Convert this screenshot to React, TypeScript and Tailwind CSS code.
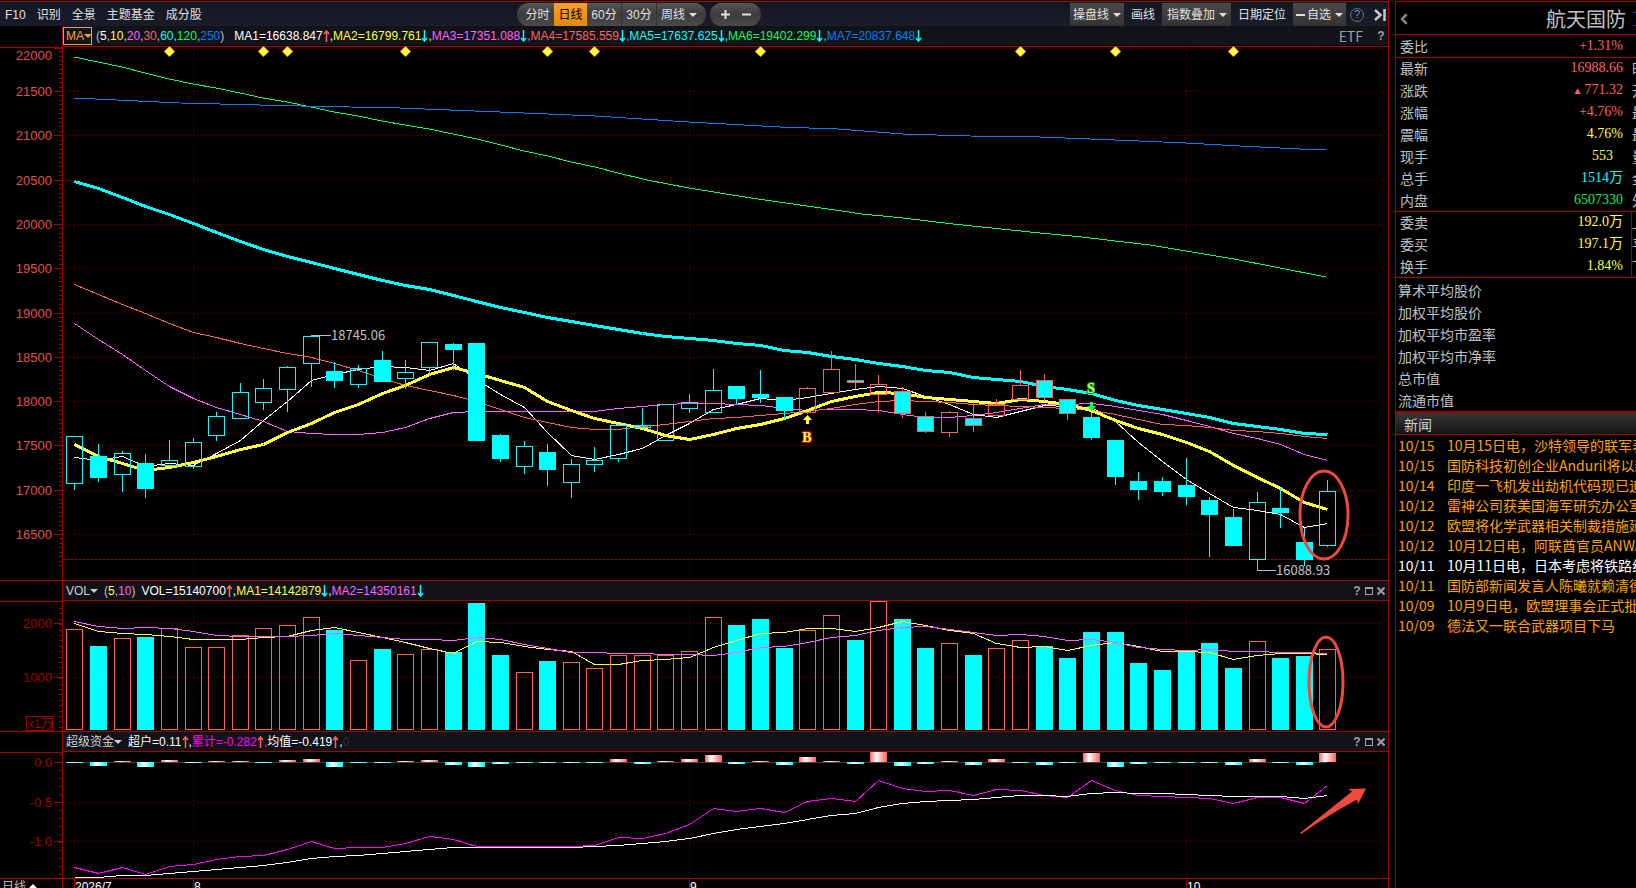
import { Fragment, type ReactNode } from "react";
import { ChevronLeft } from "lucide-react";

const RED = "#a00000";
const GRID = "#6a0000";
const UP = "#ff6060";
const CYAN = "#00ffff";

// every panel shares the same x positions, one per trading day
const cx = (i: number) => Math.floor(74.85 + 23.643 * i);

const months = [
  { index: 0, label: "2026/7" },
  { index: 5, label: "8" },
  { index: 26, label: "9" },
  { index: 47, label: "10" },
];

// h = hollow, f = filled, rh = red hollow, rf = red outline with fill
type Candle = [kind: "h" | "f" | "rh" | "rf", high: number, top: number, bottom: number, low: number];

const candles: Candle[] = [
  ["h", 436, 436, 484, 490],
  ["f", 444, 456, 478, 482],
  ["h", 451, 453, 475, 492],
  ["f", 454, 463, 489, 498],
  ["h", 440, 460, 466, 466],
  ["h", 438, 442, 467, 469],
  ["h", 412, 416, 436, 441],
  ["h", 383, 392, 419, 419],
  ["h", 379, 388, 403, 410],
  ["h", 366, 367, 390, 412],
  ["h", 336, 336, 364, 387],
  ["f", 362, 371, 381, 388],
  ["h", 365, 368, 385, 388],
  ["f", 351, 360, 382, 382],
  ["h", 360, 372, 379, 389],
  ["h", 342, 342, 368, 376],
  ["f", 343, 344, 350, 370],
  ["f", 343, 343, 441, 441],
  ["f", 434, 435, 459, 462],
  ["h", 441, 446, 467, 474],
  ["f", 444, 452, 470, 486],
  ["h", 459, 464, 483, 498],
  ["h", 447, 460, 465, 472],
  ["h", 424, 425, 459, 462],
  ["h", 408, 425, 428, 428],
  ["h", 404, 404, 441, 441],
  ["h", 394, 402, 409, 413],
  ["h", 369, 390, 413, 413],
  ["f", 386, 386, 399, 404],
  ["f", 370, 394, 398, 403],
  ["f", 397, 397, 411, 419],
  ["rh", 387, 388, 413, 414],
  ["rh", 351, 369, 393, 393],
  ["rf", 364, 380, 383, 389],
  ["rh", 375, 384, 395, 413],
  ["rf", 387, 391, 414, 418],
  ["rf", 412, 416, 432, 433],
  ["rh", 411, 412, 433, 437],
  ["rf", 402, 418, 426, 432],
  ["rh", 399, 404, 416, 416],
  ["rh", 370, 385, 400, 400],
  ["rf", 374, 380, 398, 401],
  ["rf", 399, 399, 414, 420],
  ["f", 412, 417, 438, 440],
  ["f", 440, 440, 477, 485],
  ["f", 472, 481, 490, 500],
  ["f", 477, 481, 492, 496],
  ["f", 458, 485, 497, 505],
  ["f", 497, 500, 515, 557],
  ["f", 509, 517, 546, 546],
  ["h", 492, 502, 560, 570],
  ["f", 488, 508, 513, 528],
  ["f", 528, 542, 560, 566],
  ["h", 480, 491, 546, 547],
];

const ma5 = [457, 460, 456, 466, 463, 465, 453, 440, 420, 401, 380, 374, 369, 366, 367, 370, 363, 379, 394, 407, 432, 455, 459, 454, 448, 435, 423, 409, 404, 398, 400, 397, 393, 389, 386, 388, 396, 404, 414, 417, 411, 405, 406, 407, 421, 442, 461, 479, 493, 507, 510, 514, 527, 523];
const ma10 = [444, 456, 463, 470, 467, 462, 456, 449, 444, 432, 423, 412, 404, 393, 385, 374, 367, 373, 380, 387, 401, 410, 418, 423, 428, 435, 439, 434, 428, 424, 418, 410, 401, 396, 392, 393, 397, 399, 401, 403, 399, 401, 404, 410, 420, 428, 434, 442, 451, 465, 477, 488, 502, 509];
const ma20 = [323, 339, 354, 370, 386, 398, 407, 414, 421, 431, 433, 434, 434, 432, 427, 418, 412, 411, 411, 411, 411, 411, 411, 408, 406, 404, 403, 403, 404, 405, 408, 410, 409, 409, 410, 414, 417, 417, 415, 412, 408, 404, 404, 403, 406, 410, 414, 420, 426, 433, 438, 444, 454, 460];
const ma30 = [284, 294, 304, 313, 323, 332, 337, 343, 348, 353, 357, 363, 370, 378, 385, 390, 395, 401, 409, 417, 422, 427, 429, 429, 426, 424, 421, 418, 417, 415, 413, 411, 408, 404, 401, 400, 401, 402, 404, 405, 406, 407, 408, 410, 414, 419, 424, 425, 427, 430, 431, 433, 436, 438];
const ma60 = [181, 188, 197, 206, 214, 223, 232, 241, 249, 256, 262, 268, 274, 280, 285, 289, 295, 301, 307, 312, 317, 321, 325, 329, 333, 336, 338, 340, 343, 345, 350, 352, 356, 359, 363, 366, 370, 372, 377, 379, 381, 386, 389, 393, 400, 405, 409, 413, 417, 423, 426, 429, 433, 434];
const ma120 = "74,57 98,62 122,67 145,73 169,79 193,84 216,88 240,93 263,98 287,102 311,107 334,112 358,116 382,121 405,125 429,129 453,134 477,139 501,145 524,151 548,156 571,162 595,167 618,173 647,180 689,188 720,193 751,198 800,205 835,210 862,214 903,218 953,224 1040,233 1082,237 1115,241 1150,245 1186,251 1234,259 1280,268 1326,277";
const ma250 = "74,98 180,103 300,106 400,108 500,112 595,116 689,122 780,127 838,129 903,134 970,136 1040,137 1115,140 1186,143 1240,146 1300,149 1326,150";

const diamonds = [4, 8, 9, 14, 20, 22, 29, 40, 44, 49];

// top edge of each bar, "r" = rising day
const volumes: ["r" | "c", number][] = [
  ["r", 629], ["c", 646], ["r", 638], ["c", 637], ["r", 628], ["r", 647], ["r", 647], ["r", 635], ["r", 628],
  ["r", 625], ["r", 617], ["c", 630], ["r", 660], ["c", 649], ["r", 654], ["r", 649], ["c", 652], ["c", 603],
  ["c", 655], ["r", 672], ["c", 661], ["r", 662], ["r", 668], ["r", 655], ["r", 655], ["r", 655], ["r", 651],
  ["r", 617], ["c", 625], ["c", 619], ["c", 648], ["r", 630], ["r", 615], ["c", 640], ["r", 601], ["c", 619],
  ["c", 648], ["r", 643], ["c", 655], ["r", 648], ["r", 640], ["c", 646], ["c", 658], ["c", 632], ["c", 632],
  ["c", 663], ["c", 670], ["c", 652], ["c", 643], ["c", 668], ["r", 641], ["c", 658], ["c", 656], ["r", 649],
];
const volMa5 = [623, 631, 633, 634, 636, 639, 639, 639, 637, 636, 630, 627, 632, 637, 642, 648, 653, 641, 642, 646, 649, 651, 664, 664, 660, 659, 657, 647, 640, 633, 632, 628, 628, 631, 627, 621, 625, 630, 633, 643, 647, 646, 650, 645, 642, 646, 651, 651, 652, 659, 655, 653, 653, 654];
const volMa10 = [621, 626, 628, 627, 628, 631, 635, 636, 636, 636, 635, 633, 635, 637, 639, 639, 640, 637, 639, 644, 648, 652, 652, 653, 653, 654, 654, 655, 652, 647, 646, 642, 637, 635, 630, 627, 626, 629, 632, 635, 634, 636, 640, 639, 642, 647, 649, 650, 649, 651, 651, 652, 652, 653];

// positive bars are red, negative cyan
const flows = [-1, -4, 1, -5, 2, -1, 1, 1, -1, 2, 3, -5, -1, -1, 1, 2, -3, -5, -2, -1, -1, -1, -1, 3, -2, 1, 3, 7, -2, 1, -3, 5, 1, -2, 10, -4, -2, 1, -3, 3, -1, -3, -1, 9, -5, -2, -1, -1, -1, -3, 3, -1, -3, 9];
const flowTotal = [867, 873, 867, 874, 866, 864, 859, 856, 855, 849, 841, 848, 847, 847, 843, 836, 839, 846, 846, 846, 846, 846, 845, 837, 838, 833, 824, 808, 811, 808, 812, 801, 798, 801, 780, 788, 791, 790, 795, 789, 790, 795, 797, 780, 790, 795, 796, 797, 798, 803, 797, 797, 803, 785];
const flowMean = [877, 877, 875, 875, 873, 871, 869, 867, 865, 862, 858, 856, 855, 853, 851, 849, 847, 847, 847, 847, 847, 847, 846, 845, 843, 841, 838, 833, 829, 826, 823, 819, 815, 813, 807, 803, 801, 800, 799, 797, 795, 795, 796, 793, 792, 793, 793, 794, 795, 796, 796, 796, 798, 795];

const quotes = [
  { label: "最新", value: "16988.66", color: "text-[#ff6060]", next: "昨收" },
  { label: "涨跌", value: "771.32", color: "text-[#ff6060]", next: "开盘", rising: true },
  { label: "涨幅", value: "+4.76%", color: "text-[#ff6060]", next: "最高" },
  { label: "震幅", value: "4.76%", color: "text-[#ffff40]", next: "最低" },
  { label: "现手", value: "553", color: "text-[#ffff40]", next: "量比" },
  { label: "总手", value: "1514万", color: "text-[#00ffff]", next: "金额" },
  { label: "内盘", value: "6507330", color: "text-[#00f060]", next: "外盘" },
];

const orders = [
  { label: "委卖", value: "192.0万", color: "text-[#ffff40]", next: "上涨" },
  { label: "委买", value: "197.1万", color: "text-[#ffff40]", next: "平盘" },
  { label: "换手", value: "1.84%", color: "text-[#ffff40]", next: "下跌" },
];

const averages = ["算术平均股价", "加权平均股价", "加权平均市盈率", "加权平均市净率", "总市值", "流通市值"];

const news = [
  { date: "10/15", title: "10月15日电，沙特领导的联军表示" },
  { date: "10/15", title: "国防科技初创企业Anduril将以新" },
  { date: "10/14", title: "印度一飞机发出劫机代码现已追踪" },
  { date: "10/12", title: "雷神公司获美国海军研究办公室合同" },
  { date: "10/12", title: "欧盟将化学武器相关制裁措施延长" },
  { date: "10/12", title: "10月12日电，阿联酋官员ANWAR" },
  { date: "10/11", title: "10月11日电，日本考虑将铁路线路", read: true },
  { date: "10/11", title: "国防部新闻发言人陈曦就赖清德" },
  { date: "10/09", title: "10月9日电，欧盟理事会正式批准" },
  { date: "10/09", title: "德法又一联合武器项目下马" },
];

const toPoints = (values: number[]) =>
  values.map((y, i) => `${cx(i) + 0.5},${y + 0.5}`).join(" ");

function Line({ points, color, width = 1 }: { points: string; color: string; width?: number }) {
  return <polyline points={points} fill="none" stroke={color} strokeWidth={width} />;
}

function Caret() {
  return (
    <svg width="8" height="4" viewBox="0 0 8 4" className="shrink-0" aria-hidden="true">
      <path d="M0 0h8L4 4z" fill="currentColor" />
    </svg>
  );
}

function Arrow({ up = false }: { up?: boolean }) {
  return (
    <svg width="7" height="12" viewBox="0 0 7 12" className="shrink-0" aria-hidden="true">
      <path
        d={up ? "M3.5 12V1M1 4l2.5-3L6 4" : "M3.5 0v11M1 8l2.5 3L6 8"}
        fill="none"
        stroke={up ? UP : CYAN}
        strokeWidth="1.5"
      />
    </svg>
  );
}

function MonthLines({ top, bottom }: { top: number; bottom: number }) {
  return (
    <>
      {months.map((m) => (
        <line
          key={m.label}
          x1={cx(m.index) + 0.5}
          x2={cx(m.index) + 0.5}
          y1={top}
          y2={bottom}
          stroke={GRID}
          strokeDasharray="1 3"
        />
      ))}
    </>
  );
}

interface AxisProps {
  top: number;
  bottom: number;
  color: string;
  ticks: { y: number; label: string; labelY?: number }[];
  minor: number[];
}

function Axis({ top, bottom, color, ticks, minor }: AxisProps) {
  return (
    <>
      <path d={`M62 ${top + 0.5}H1388M0 ${top + 1.5}H62M62.5 ${top}V${bottom}`} stroke={RED} fill="none" />
      {minor.map((y) => (
        <line key={y} x1="59" x2="62" y1={y + 0.5} y2={y + 0.5} stroke={RED} />
      ))}
      {ticks.map((t) => (
        <Fragment key={t.label}>
          <line x1="54" x2="62" y1={t.y + 0.5} y2={t.y + 0.5} stroke={RED} />
          <line x1="66" x2="1386" y1={t.y + 0.5} y2={t.y + 0.5} stroke={GRID} strokeDasharray="1 3" />
          <text x="52" y={(t.labelY ?? t.y) + 5} textAnchor="end" fontSize="13" fill={color}>
            {t.label}
          </text>
        </Fragment>
      ))}
    </>
  );
}

const priceY = (price: number) => Math.round(91 + (21500 - price) * 0.0886);

function PriceChart() {
  const ticks = Array.from({ length: 12 }, (_, i) => {
    const price = 22000 - i * 500;
    return i === 0
      ? { y: 48, label: "22000", labelY: 55 }
      : { y: priceY(price), label: String(price) };
  });
  const minor = Array.from({ length: 117 }, (_, i) => priceY(21950 - i * 50)).filter((y) => y < 578 && y > 50);

  return (
    <svg viewBox="0 46 1388 534" className="block w-full shrink-0" shapeRendering="crispEdges" role="img" aria-label="日线">
      <Axis top={46} bottom={580} color="#e05048" ticks={ticks} minor={minor} />
      <MonthLines top={46} bottom={580} />
      <line x1="63" x2="1388" y1="559.5" y2="559.5" stroke={RED} strokeDasharray="3 1" />

      <Line points={ma120} color="#00ff60" />
      <Line points={ma250} color="#0080ff" />
      <Line points={toPoints(ma5)} color="#ffffff" />
      <Line points={toPoints(ma20)} color="#ff60ff" />
      <Line points={toPoints(ma30)} color={UP} />
      <Line points={toPoints(ma60)} color={CYAN} width={3} />
      <Line points={toPoints(ma10)} color="#ffff40" width={3} />

      {candles.map(([kind, high, top, bottom, low], i) => {
        const x = cx(i) + 0.5;
        const color = kind.startsWith("r") ? UP : CYAN;
        return (
          <g key={i} stroke={color}>
            <path d={`M${x} ${high}V${top}M${x} ${bottom}V${low}`} />
            <rect
              x={x - 8}
              y={top + 0.5}
              width="16"
              height={bottom - top - 1}
              fill={kind === "f" || kind === "rf" ? CYAN : "none"}
            />
          </g>
        );
      })}

      {diamonds.map((i) => (
        <path
          key={i}
          d={`M${cx(i) + 0.5} 46l5.5 5.5l-5.5 5.5l-5.5 -5.5z`}
          fill="#ffff40"
          stroke="#c00000"
          strokeWidth="0.5"
          shapeRendering="auto"
        />
      ))}

      <path d="M311 335.5H331M1256.5 570.5H1276" stroke="#c0c0c0" />
      <g fontSize="13" fill="#c0c0c0" fontFamily='"Noto Sans CJK SC", sans-serif'>
        <text x="331" y="340">18745.06</text>
        <text x="1276" y="575">16088.93</text>
      </g>

      <path d="M807.5 415l4.500 5h-3v4h-3v-4h-3z" fill="#ffff40" shapeRendering="auto" />
      <path d="M1091.500 411l4.500 -5h-3v-4h-3v4h-3z" fill="#00ff60" shapeRendering="auto" />
      <g fontSize="14" fontWeight="bold" textAnchor="middle" fontFamily='"Liberation Serif", serif' paintOrder="stroke" strokeWidth="2">
        <text x="807" y="442" fill="#ffff40" stroke="#d00000">B</text>
        <text x="1091" y="393" fill="#e0ff40" stroke="#009040">S</text>
      </g>

      <ellipse cx="1324" cy="515" rx="24" ry="44" fill="none" stroke="#f04a3e" strokeWidth="3" shapeRendering="auto" />
    </svg>
  );
}

function VolumeChart() {
  const minor = Array.from({ length: 23 }, (_, i) => Math.round(608 + i * 5.4)).filter((y) => y < 729);
  return (
    <svg viewBox="0 600 1388 131" className="block w-full shrink-0" shapeRendering="crispEdges" role="img" aria-label="VOL">
      <Axis
        top={600}
        bottom={731}
        color={RED}
        ticks={[{ y: 623, label: "2000" }, { y: 677, label: "1000" }]}
        minor={minor}
      />
      <MonthLines top={601} bottom={731} />
      <rect x="26.5" y="716.5" width="26" height="14" fill="none" stroke={RED} />
      <text x="28" y="728" fontSize="12" fill={RED}>x1万</text>

      {volumes.map(([kind, top], i) => (
        <rect
          key={i}
          x={cx(i) - 7.5}
          y={top + 0.5}
          width="16"
          height={729 - top}
          fill={kind === "c" ? CYAN : "none"}
          stroke={kind === "c" ? CYAN : UP}
        />
      ))}
      <Line points={toPoints(volMa5)} color="#ffff40" />
      <Line points={toPoints(volMa10)} color="#ff60ff" />
      <ellipse cx="1326" cy="682" rx="17" ry="45" fill="none" stroke="#f04a3e" strokeWidth="3" shapeRendering="auto" />
    </svg>
  );
}

function FlowChart() {
  const minor = Array.from({ length: 16 }, (_, i) => 754 + i * 8).filter((y) => y < 876 && y !== 762 && y !== 802);
  return (
    <svg viewBox="0 751 1388 127" className="block w-full shrink-0" shapeRendering="crispEdges" role="img" aria-label="超级资金">
      <defs>
        <linearGradient id="flow-in">
          <stop offset="0" stopColor="#ff6060" />
          <stop offset="0.35" stopColor="#ffffff" />
          <stop offset="1" stopColor="#ff6060" />
        </linearGradient>
        <linearGradient id="flow-out">
          <stop offset="0" stopColor="#00ffff" />
          <stop offset="0.35" stopColor="#ffffff" />
          <stop offset="1" stopColor="#00ffff" />
        </linearGradient>
      </defs>
      <Axis
        top={751}
        bottom={878}
        color={RED}
        ticks={[{ y: 762, label: "0.0" }, { y: 802, label: "-0.5" }, { y: 841, label: "-1.0" }]}
        minor={minor}
      />
      <MonthLines top={752} bottom={878} />
      <line x1="66" x2="1327" y1="762.5" y2="762.5" stroke="#404040" />
      {flows.map((v, i) => (
        <rect
          key={i}
          x={cx(i) - 8}
          y={v > 0 ? 762 - v : 762}
          width="17"
          height={Math.abs(v)}
          fill={v > 0 ? "url(#flow-in)" : "url(#flow-out)"}
        />
      ))}
      <Line points={toPoints(flowTotal)} color="#ff00ff" />
      <Line points={toPoints(flowMean)} color="#ffffff" />
      <path d="M1300 833L1352 791.500L1348 789L1366 788.500L1358 804L1357 799.500Q1330 814 1301 834z" fill="#f04a3e" shapeRendering="auto" />
    </svg>
  );
}

function PanelHeader({ children, tools }: { children: ReactNode; tools: ReactNode }) {
  return (
    <div className="flex h-5 shrink-0 text-xs leading-none">
      <div className="w-[63px] shrink-0 border-r border-[#a00000]" />
      <div className="mb-px flex min-w-0 flex-1 items-center whitespace-pre bg-[#121318]">
        {children}
        <div className="ml-auto flex items-center gap-1 pr-[3px] text-[#a0a0a0]">{tools}</div>
      </div>
    </div>
  );
}

function WindowTools() {
  return (
    <>
      <button className="w-2 font-bold" aria-label="帮助">?</button>
      <button aria-label="最大化" className="block">
        <svg width="8" height="8" viewBox="0 0 8 8" shapeRendering="crispEdges">
          <path d="M.5 1v6.500h7V1M0 1h8" fill="none" stroke="currentColor" strokeWidth="1" />
          <path d="M0 0h8v2H0z" fill="currentColor" />
        </svg>
      </button>
      <button aria-label="关闭" className="block">
        <svg width="8" height="8" viewBox="0 0 8 8">
          <path d="M.5.5l7 7M7.500.5l-7 7" stroke="currentColor" strokeWidth="2" />
        </svg>
      </button>
    </>
  );
}

const maValues = [
  { text: "MA1=16638.847", color: "text-white", up: true },
  { text: "MA2=16799.761", color: "text-[#ffff40]" },
  { text: "MA3=17351.088", color: "text-[#ff60ff]" },
  { text: "MA4=17585.559", color: "text-[#ff6060]" },
  { text: "MA5=17637.625", color: "text-[#00ffff]" },
  { text: "MA6=19402.299", color: "text-[#00ff60]" },
  { text: "MA7=20837.648", color: "text-[#0080ff]" },
];

const maPeriods = [
  { text: "5", color: "text-white" },
  { text: "10", color: "text-[#ffff40]" },
  { text: "20", color: "text-[#ff60ff]" },
  { text: "30", color: "text-[#ff6060]" },
  { text: "60", color: "text-[#00ffff]" },
  { text: "120", color: "text-[#00ff60]" },
  { text: "250", color: "text-[#0080ff]" },
];

const dropButton = "flex h-[23px] items-center bg-linear-to-b from-[#4a4a4a] to-[#333333]";

function Toolbar() {
  return (
    <div className="flex h-6 shrink-0 items-center whitespace-nowrap bg-linear-to-b from-[#141622] to-[#1a1c2a] pt-px text-xs text-[#e0e0e0]">
      <nav className="flex w-[517px] gap-[11px] pl-[5px]">
        <button>F10</button>
        <button>识别</button>
        <button>全景</button>
        <button>主题基金</button>
        <button>成分股</button>
      </nav>
      <div className="flex h-[23px] overflow-hidden rounded-full bg-linear-to-b from-[#555555] via-[#3c3c3c] to-[#4a4a4a]">
        <button className="w-[37px] pl-1">分时</button>
        <button className="w-[33px] bg-linear-to-b from-[#ff9c28] to-[#e08a10] text-black">日线</button>
        <button className="w-[35px] border-r border-[#333333]">60分</button>
        <button className="w-[35px] border-r border-[#333333]">30分</button>
        <button className="flex w-[49px] items-center gap-1 pl-1">
          周线
          <Caret />
        </button>
      </div>
      <div className="ml-1 flex h-[23px] w-[51px] items-center justify-center gap-3 rounded-full bg-linear-to-b from-[#555555] via-[#3c3c3c] to-[#4a4a4a]">
        <button aria-label="放大">
          <svg width="9" height="9" viewBox="0 0 9 9"><path d="M0 4.500h9M4.500 0v9" stroke="currentColor" strokeWidth="2" /></svg>
        </button>
        <button aria-label="缩小">
          <svg width="9" height="9" viewBox="0 0 9 9"><path d="M0 4.500h9" stroke="currentColor" strokeWidth="2" /></svg>
        </button>
      </div>
      <div className="ml-auto flex items-center pr-px">
        <button className={`${dropButton} w-[54px] gap-1 pl-[3px]`}>操盘线<Caret /></button>
        <button className="w-[38px]">画线</button>
        <button className={`${dropButton} w-[69px] gap-1 pl-[5px]`}>指数叠加<Caret /></button>
        <button className="w-[62px]">日期定位</button>
        <button className={`${dropButton} w-[53px] pl-[3px]`}>
          <svg width="9" height="2" viewBox="0 0 9 2"><path d="M0 0h9v2H0z" fill="currentColor" /></svg>
          <span className="mr-1 ml-0.5">自选</span>
          <Caret />
        </button>
        <button className="ml-1 flex size-[14px] items-center justify-center rounded-full border border-[#707078] text-[11px] leading-none text-[#909090]" aria-label="帮助">?</button>
        <button className="ml-[10px]" aria-label="展开">
          <svg width="13" height="12" viewBox="0 0 13 12">
            <path d="M1 1l5.500 5L1 11" fill="none" stroke="#c8c8c8" strokeWidth="2.500" />
            <path d="M10.500 0v12" stroke="#c8c8c8" strokeWidth="2.500" />
          </svg>
        </button>
      </div>
    </div>
  );
}

interface QuoteRowProps {
  label: string;
  value: string;
  color: string;
  next?: string;
  rising?: boolean;
  divided?: boolean;
}

function QuoteRow({ label, value, color, next, rising, divided }: QuoteRowProps) {
  return (
    <div className="flex h-[22px] items-center pl-1">
      <dt className="text-[#c0c0c0]">{label}</dt>
      <dd className={`flex-1 text-right font-['Liberation_Serif','Noto_Sans_CJK_SC',serif] ${color} ${value === "553" ? "pr-[10px]" : ""}`}>
        {rising && <span className="mr-0.5 text-[10px]">▲</span>}
        {value}
      </dd>
      <span
        className={`ml-2 flex h-full w-[5px] items-center overflow-hidden whitespace-nowrap border-l text-[#c0c0c0] ${divided ? "border-[#a00000]" : "border-transparent"}`}
      >
        {next}
      </span>
    </div>
  );
}

function QuotePanel() {
  return (
    <aside className="mt-px w-[241px] shrink-0 overflow-hidden border-t border-l border-[#a00000] font-['Noto_Sans_CJK_SC',sans-serif] text-sm leading-none">
      <header className="flex h-[33px] items-center border-b border-[#a00000] pt-0.5 text-xl leading-none text-[#c0c0c0]">
        <button aria-label="返回" className="text-[#808080]">
          <ChevronLeft size={16} strokeWidth={4} />
        </button>
        <h1 className="ml-auto">航天国防</h1>
        <span className="ml-2 w-[2px] overflow-hidden font-['Liberation_Serif',serif] text-[#00b0ff]">I</span>
      </header>
      <dl className="-mt-px border-b border-[#a00000] pt-px">
        <QuoteRow label="委比" value="+1.31%" color="text-[#ff6060]" />
      </dl>
      <dl className="-mt-px border-b border-[#a00000]">
        {quotes.map((q) => (
          <QuoteRow key={q.label} {...q} />
        ))}
      </dl>
      <dl className="-mt-px border-b border-[#a00000]">
        {orders.map((q) => (
          <QuoteRow key={q.label} {...q} divided />
        ))}
      </dl>
      <ul className="pt-px pl-0.5 text-[#c0c0c0]">
        {averages.map((name) => (
          <li key={name} className="flex h-[22px] items-center">{name}</li>
        ))}
      </ul>
      <h2 className="flex h-6 items-center border-t-2 border-b border-[#a00000] bg-linear-to-b from-[#383838] to-[#141414] pl-2 text-[#d0d0d0]">
        新闻
      </h2>
      <ul>
        {news.map((item) => (
          <li key={item.title}>
            <a
              href="#"
              className={`flex h-5 items-center gap-3 whitespace-nowrap pl-0.5 ${item.read ? "text-white" : "text-[#ffa000]"}`}
            >
              <time className="w-[37px] shrink-0">{item.date}</time>
              <span>{item.title}</span>
            </a>
          </li>
        ))}
      </ul>
    </aside>
  );
}

export default function App() {
  return (
    <div className="flex h-screen gap-1.5 overflow-hidden bg-black font-['Liberation_Sans','Noto_Sans_CJK_SC',sans-serif]">
      <main className="mt-px flex min-w-0 flex-1 flex-col overflow-hidden border-t border-r border-[#a00000]">
        <Toolbar />

        <PanelHeader
          tools={
            <>
              <span className="mr-2.5 font-['Noto_Sans_CJK_SC',sans-serif] text-sm leading-none">ETF</span>
              <button className="w-2 font-bold" aria-label="帮助">?</button>
            </>
          }
        >
          <button className="flex h-[18px] w-[29px] items-center border border-[#ff9c28] pl-0.5 text-[#ff9c28]">
            MA
            <Caret />
          </button>
          <span className="ml-1 text-[#c0c0c0]">
            (
            {maPeriods.map((p, i) => (
              <Fragment key={p.text}>
                {i > 0 && ","}
                <span className={p.color}>{p.text}</span>
              </Fragment>
            ))}
            )
          </span>
          <span className="w-2.5" />
          {maValues.map((m, i) => (
            <span key={m.text} className={`flex items-center ${m.color}`}>
              {m.text}
              <Arrow up={m.up} />
              {i < maValues.length - 1 && ","}
            </span>
          ))}
        </PanelHeader>
        <PriceChart />

        <div className="shrink-0 border-t border-[#a00000]">
          <div className="-mb-px">
            <PanelHeader tools={<WindowTools />}>
              <button className="ml-[3px] flex items-center text-[#d0d0d0]">
                VOL
                <Caret />
              </button>
              <span className="ml-1.5 text-[#c0c0c0]">
                (<span className="text-[#ffff40]">5</span>,<span className="text-[#ff60ff]">10</span>)
              </span>
              <span className="ml-1.5 text-white">VOL=15140700</span>
              <Arrow up />
              <span className="text-white">,</span>
              <span className="text-[#ffff40]">MA1=14142879</span>
              <Arrow />
              <span className="text-white">,</span>
              <span className="text-[#ff60ff]">MA2=14350161</span>
              <Arrow />
            </PanelHeader>
          </div>
        </div>
        <VolumeChart />

        <div className="shrink-0 border-t border-[#a00000]">
          <div className="-mb-px">
            <PanelHeader tools={<WindowTools />}>
              <button className="ml-[3px] flex items-center text-[#d0d0d0]">
                超级资金
                <Caret />
              </button>
              <span className="ml-1.5 text-white">超户=0.11</span>
              <Arrow up />
              <span className="text-white">,</span>
              <span className="text-[#ff00ff]">累计=-0.282</span>
              <Arrow up />
              <span className="text-[#ff00ff]">,</span>
              <span className="text-white">均值=-0.419</span>
              <Arrow up />
              <span className="text-white">,</span>
              <span className="text-[#303030]">0</span>
            </PanelHeader>
          </div>
        </div>
        <FlowChart />

        <footer className="flex shrink-0 border-t border-[#a00000] text-xs">
          <button className="flex w-[63px] shrink-0 items-center gap-0.5 border-r border-[#a00000] pl-0.5 text-[#c0c0c0]">
            日线
            <svg width="10" height="10" viewBox="0 0 10 10" aria-hidden="true"><path d="M5 2l5 5H0z" fill="#fff" /></svg>
          </button>
          <svg viewBox="63 879 1325 16" className="block min-w-0 flex-1" shapeRendering="crispEdges">
            {months.map((m) => (
              <Fragment key={m.label}>
                <line x1={cx(m.index) + 0.5} x2={cx(m.index) + 0.5} y1="879" y2="899" stroke={RED} />
                <text x={cx(m.index) + 1} y="891" fontSize="12" fill="#fff">{m.label}</text>
              </Fragment>
            ))}
          </svg>
        </footer>
      </main>
      <QuotePanel />
    </div>
  );
}
